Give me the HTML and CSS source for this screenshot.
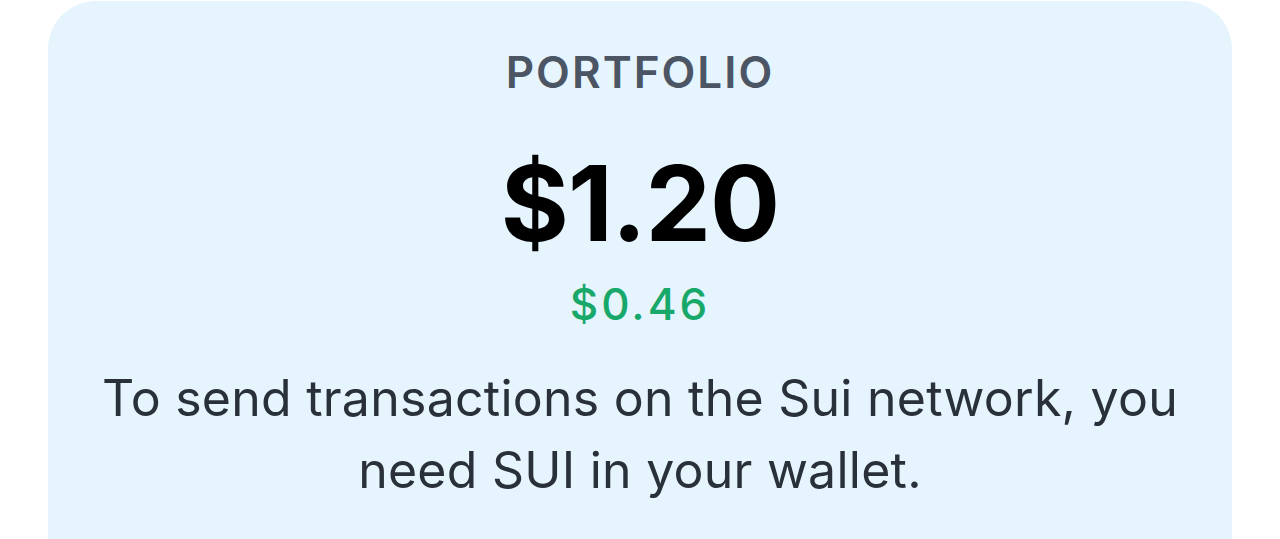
FILE: index.html
```html
<!DOCTYPE html>
<html lang="en">
<head>
    <meta charset="UTF-8">
    <meta name="viewport" content="width=device-width, initial-scale=1.0">
    <title>Portfolio</title>
    <link rel="stylesheet" href="styles.css">
</head>
<body>
    <main class="portfolio">
        <h2 class="portfolio-label">Portfolio</h2>
        <p class="portfolio-total">$1.20</p>
        <p class="portfolio-change">$0.46</p>
        <p class="portfolio-note">To send transactions on the Sui network, you need SUI in your wallet.</p>
    </main>
</body>
</html>
```

FILE: styles.css
```css
body {
    font-family: 'Inter', 'Noto Sans', sans-serif;
    margin: 0;
    padding: 0;
    background-color: #fff;
}
.portfolio {
    margin: 1px 48px 0;
    padding: 45px 48px 60px;
    background: #e6f4fe;
    border-radius: 48px 48px 0 0;
    text-align: center;
    min-height: 600px;
}
.portfolio-label {
    margin: 0;
    font-size: 44px;
    font-weight: 600;
    letter-spacing: 2px;
    text-transform: uppercase;
    color: #4b5563;
    line-height: 52px;
}
.portfolio-total {
    margin: 50px 0 0;
    font-size: 104px;
    font-weight: 700;
    letter-spacing: -1px;
    color: #000;
    line-height: 110px;
}
.portfolio-change {
    margin: 20px 0 0;
    font-size: 44px;
    font-weight: 500;
    letter-spacing: 3px;
    color: #18a86a;
    line-height: 52px;
}
.portfolio-note {
    margin: 32px 0 0;
    font-size: 50px;
    letter-spacing: 0.25px;
    color: #2a303a;
    line-height: 72px;
}
```
